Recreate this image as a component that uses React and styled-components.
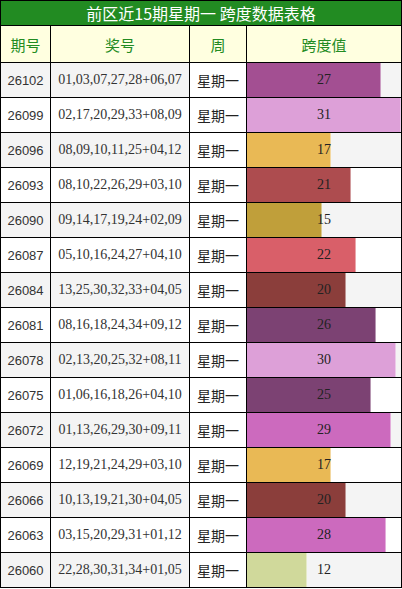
import React from "react";
import styled, { createGlobalStyle } from "styled-components";

const Global = createGlobalStyle`
  html, body { margin: 0; padding: 0; background: #fff; }
  body { font-family: "Liberation Serif", "Noto Sans CJK SC", serif; }
`;

const Table = styled.table`
  width: 401px;
  border-collapse: collapse;
  table-layout: fixed;
  border: 1px solid #000;
`;

const TitleCell = styled.th`
  height: 24px;
  padding: 0;
  background: #228b22;
  color: #fff;
  font-family: "Noto Sans CJK SC", sans-serif;
  font-weight: 400;
  font-size: 16px;
  line-height: 24px;
  border: 1px solid #000;
  text-align: center;
`;

const HeadCell = styled.th`
  height: 36px;
  padding: 0;
  background: #ffffe0;
  color: #228b22;
  font-family: "Noto Sans CJK SC", sans-serif;
  font-weight: 400;
  font-size: 15px;
  border: 1px solid #000;
  text-align: center;
`;

const Row = styled.tr`
  background: ${(p) => (p.$odd ? "#f4f4f4" : "#ffffff")};
`;

const Cell = styled.td`
  height: 34px;
  padding: 0;
  border: 1px solid #000;
  text-align: center;
  color: #333;
  white-space: nowrap;
`;

const IssueCell = styled(Cell)`
  font-family: "Liberation Sans", sans-serif;
  font-size: 13px;
`;

const NumCell = styled(Cell)`
  font-family: "Liberation Serif", serif;
  font-size: 14px;
`;

const WeekCell = styled(Cell)`
  background: #fff;
  color: #222;
  font-family: "Noto Sans CJK SC", sans-serif;
  font-size: 14px;
`;

const BarCell = styled(Cell)`
  vertical-align: middle;
`;

const Track = styled.div`
  display: grid;
  height: 34px;
  width: 100%;
`;

const Fill = styled.div`
  grid-area: 1 / 1;
  height: 100%;
  background: ${(p) => p.$color};
  box-shadow: inset -1px 0 0 rgba(255, 255, 255, 0.45);
  justify-self: start;
`;

const Label = styled.span`
  grid-area: 1 / 1;
  justify-self: center;
  align-self: center;
  font-family: "Liberation Serif", serif;
  font-size: 14px;
  color: #222;
`;

const rows = [
  ["26102", "01,03,07,27,28+06,07", 27, "#a34f92"],
  ["26099", "02,17,20,29,33+08,09", 31, "#dda0d8"],
  ["26096", "08,09,10,11,25+04,12", 17, "#e9b955"],
  ["26093", "08,10,22,26,29+03,10", 21, "#ad4c4f"],
  ["26090", "09,14,17,19,24+02,09", 15, "#c09f3a"],
  ["26087", "05,10,16,24,27+04,10", 22, "#d95f69"],
  ["26084", "13,25,30,32,33+04,05", 20, "#8b3e3b"],
  ["26081", "08,16,18,24,34+09,12", 26, "#7c4273"],
  ["26078", "02,13,20,25,32+08,11", 30, "#dda0d8"],
  ["26075", "01,06,16,18,26+04,10", 25, "#7c4273"],
  ["26072", "01,13,26,29,30+09,11", 29, "#cc6abe"],
  ["26069", "12,19,21,24,29+03,10", 17, "#e9b955"],
  ["26066", "10,13,19,21,30+04,05", 20, "#8b3e3b"],
  ["26063", "03,15,20,29,31+01,12", 28, "#cc6abe"],
  ["26060", "22,28,30,31,34+01,05", 12, "#d0d99b"],
];

const MAX = 31;

export default function App() {
  return (
    <>
      <Global />
      <Table>
        <colgroup>
          <col style={{ width: "50px" }} />
          <col style={{ width: "139px" }} />
          <col style={{ width: "57px" }} />
          <col style={{ width: "155px" }} />
        </colgroup>
        <thead>
          <tr>
            <TitleCell colSpan={4}>前区近15期星期一 跨度数据表格</TitleCell>
          </tr>
          <tr>
            <HeadCell>期号</HeadCell>
            <HeadCell>奖号</HeadCell>
            <HeadCell>周</HeadCell>
            <HeadCell>跨度值</HeadCell>
          </tr>
        </thead>
        <tbody>
          {rows.map(([issue, nums, span, color], i) => (
            <Row key={issue} $odd={i % 2 === 0}>
              <IssueCell>{issue}</IssueCell>
              <NumCell>{nums}</NumCell>
              <WeekCell>星期一</WeekCell>
              <BarCell>
                <Track>
                  <Fill $color={color} style={{ width: `${(span / MAX) * 100}%` }} />
                  <Label>{span}</Label>
                </Track>
              </BarCell>
            </Row>
          ))}
        </tbody>
      </Table>
    </>
  );
}
